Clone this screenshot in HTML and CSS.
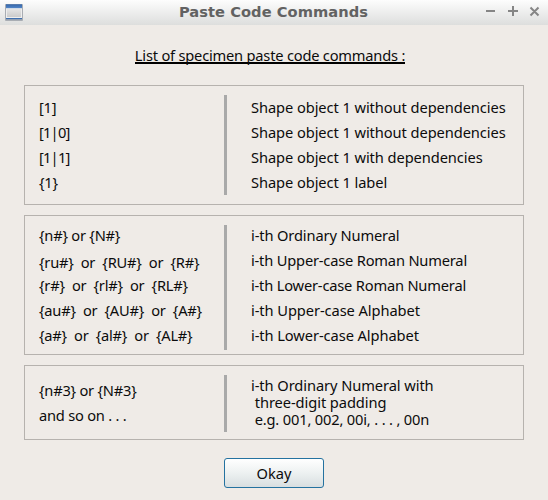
FILE: index.html
```
<!DOCTYPE html>
<html lang="en">
<head>
<meta charset="utf-8">
<title>Paste Code Commands</title>
<link rel="stylesheet" href="styles.css">
</head>
<body>
<header class="titlebar">
  <svg class="app-icon" width="18" height="17" viewBox="0 0 18 17">
    <defs>
      <linearGradient id="pane" x1="0" y1="0" x2="0" y2="1"><stop offset="0" stop-color="#e5e5e5"/><stop offset="1" stop-color="#cbcbcb"/></linearGradient>
      <linearGradient id="bar" x1="0" y1="0" x2="0" y2="1"><stop offset="0" stop-color="#3465a8"/><stop offset="1" stop-color="#5286c8"/></linearGradient>
    </defs>
    <rect x="0" y="0" width="18" height="17" rx="1" fill="#a9adb3"/>
    <rect x="1" y="4" width="16" height="10" fill="#eeeeee"/>
    <rect x="1" y="0.3" width="16" height="3.9" fill="url(#bar)"/>
    <rect x="2" y="5" width="14" height="8" fill="url(#pane)"/>
    <rect x="1" y="14" width="16" height="1.2" fill="#3e6fae"/>
  </svg>
  <h1 class="caption">Paste Code Commands</h1>
  <svg class="controls" width="54" height="11" viewBox="0 0 54 11" fill="none" stroke="#858585" stroke-width="2">
    <path d="M0 5H9M22 5H32M27 0V10M44.5 1.5L52.5 9.5M52.5 1.5L44.5 9.5"/>
  </svg>
</header>
<main>
  <h2 class="heading"><span>List of specimen paste code commands :</span></h2>
  <section class="box objects">
    <div class="codes"><p>[1]</p><p class="bars">[1|0]</p><p class="bars">[1|1]</p><p>{1}</p></div>
    <div class="notes"><p>Shape object 1 without dependencies</p><p>Shape object 1 without dependencies</p><p>Shape object 1 with dependencies</p><p>Shape object 1 label</p></div>
  </section>
  <section class="box numerals">
    <div class="codes"><p>{n#} or {N#}</p><p class="lowered">{ru#}  or  {RU#}  or  {R#}</p><p>{r#}  or  {rl#}  or  {RL#}</p><p>{au#}  or  {AU#}  or  {A#}</p><p>{a#}  or  {al#}  or  {AL#}</p></div>
    <div class="notes"><p class="ordinal">i-th Ordinary Numeral</p><p class="roman">i-th Upper-case Roman Numeral</p><p class="roman">i-th Lower-case Roman Numeral</p><p>i-th Upper-case Alphabet</p><p>i-th Lower-case Alphabet</p></div>
  </section>
  <section class="box padded">
    <div class="codes"><p>{n#3} or {N#3}</p><p>and so on . . .</p></div>
    <div class="notes"><p>i-th Ordinary Numeral with</p><p> three-digit padding</p><p class="sample"> e.g. 001, 002, 00i, . . . , 00n</p></div>
  </section>
  <button class="okay">Okay</button>
</main>
</body>
</html>
```
FILE: styles.css
```
* { box-sizing: border-box; }
body {
  margin: 0;
  height: 500px;
  overflow: hidden;
  background: #efebe7;
  color: #0c0c0c;
  font: 14.667px/25px "Noto Sans", "Open Sans", sans-serif;
}
h1, h2, p { margin: 0; font-size: inherit; font-weight: normal; }
.titlebar {
  display: flex;
  align-items: flex-start;
  height: 25px;
  padding: 4px 8px 0 5px;
  background: linear-gradient(#fdfdfd, #dddedd);
}
.caption {
  flex: 1;
  padding-left: 38px;
  margin-top: -4px;
  text-align: center;
  font: bold 14.667px/24px "DejaVu Sans", sans-serif;
  letter-spacing: 0.05px;
  color: #626262;
}
.controls { margin-top: 2px; }
main { display: flex; flex-direction: column; align-items: center; }
.heading {
  height: 60px;
  padding-top: 18px;
  letter-spacing: -0.21px;
}
.heading span {
  display: block;
  height: 21px;
  margin-right: 8px;
  border-bottom: 2px solid #000;
  white-space: nowrap;
}
.box {
  display: flex;
  width: 500px;
  margin-bottom: 10px;
  padding: 9px 14px;
  border: 1px solid #b6b2ae;
  white-space: pre;
}
.objects { height: 120px; }
.numerals { height: 140px; padding-bottom: 4px; }
.padded { height: 75px; padding-bottom: 7px; margin-bottom: 18px; }
.codes {
  width: 188px;
  border-right: 3px solid #a9a9a9;
  letter-spacing: -0.23px;
}
.notes { padding-left: 24px; letter-spacing: -0.08px; }
.bars { letter-spacing: -0.8px; }
.ordinal { letter-spacing: -0.13px; }
.roman { letter-spacing: -0.19px; }
.sample { letter-spacing: -0.17px; }
.numerals p:first-child { margin-top: -2px; }
.lowered { padding-top: 2px; height: 25px; }
.padded .codes { padding-top: 3px; }
.padded .notes { padding-top: 2px; line-height: 17px; }
.okay {
  width: 100px;
  height: 30px;
  padding: 1px 0 0;
  border: 1px solid #2472a0;
  border-radius: 3px;
  background: linear-gradient(#fff, #edf1f1 50%, #d8dee0);
  color: inherit;
  font: inherit;
}
```
